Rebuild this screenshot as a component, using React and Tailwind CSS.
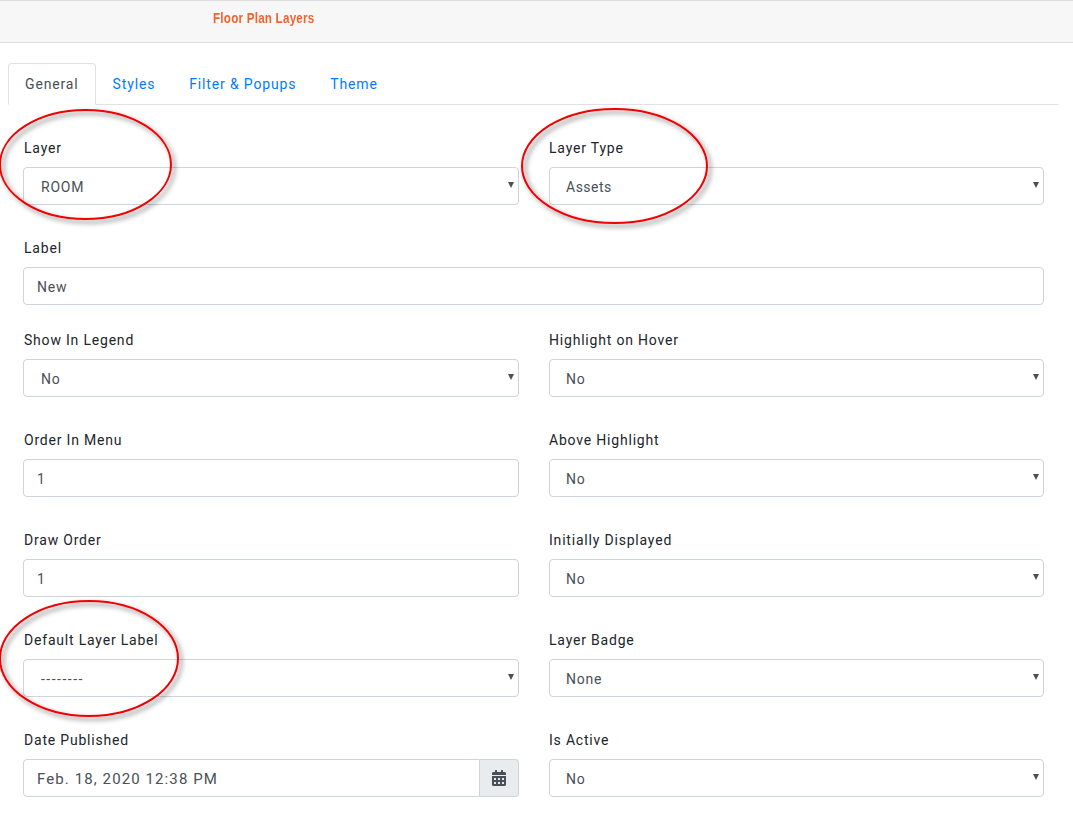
import React from "react";
import { FaCalendarAlt } from "react-icons/fa";

const font = "font-['Roboto','Liberation_Sans',sans-serif] text-[14px] tracking-[0.8px]";

const Field = ({ label, right, className, children }) => (
  <div className={className}>
    <label className={`block h-[20px] mb-[9px] leading-[20px] text-[#212529] ${right ? "" : "pl-px"}`}>{label}</label>
    {children}
  </div>
);

const TextInput = ({ value }) => (
  <input
    readOnly
    value={value}
    className="block w-full h-[38px] pt-[2px] px-[13px] border border-[#ced4da] rounded-[4px] bg-white text-[#495057] outline-none"
  />
);

const Select = ({ value, right, className = "" }) => (
  <div className="relative">
    <select
      value={value}
      onChange={() => {}}
      className={`block w-full h-[38px] pt-[2px] ${right ? "pl-[16px]" : "pl-[17px]"} border border-[#ced4da] rounded-[4px] bg-white text-[#495057] appearance-none outline-none ${className}`}
    >
      <option>{value}</option>
    </select>
    <svg className="absolute right-[5px] top-[15px] w-[6px] h-[6px] pointer-events-none" viewBox="0 0 6 6">
      <path d="M0 0H6L3 6Z" fill="#495057" />
    </svg>
  </div>
);

const DateInput = ({ value }) => (
  <div className="flex h-[38px]">
    <input
      readOnly
      value={value}
      className="flex-1 min-w-0 pt-[2px] px-[13px] border border-[#ced4da] rounded-l-[4px] bg-white text-[15px] tracking-[1.1px] text-[#495057] outline-none"
    />
    <div className="w-[39px] flex items-center justify-center border border-l-0 border-[#ced4da] rounded-r-[4px] bg-[#e9ecef] text-[#495057]">
      <FaCalendarAlt size={16} />
    </div>
  </div>
);

const Tab = ({ active, children }) => (
  <a
    href="#"
    className={
      active
        ? "h-[42px] -mb-px px-4 flex items-center tracking-[0.85px] border border-[#dee2e6] border-b-white rounded-t-[4px] bg-white text-[#495057]"
        : "h-[42px] -mb-px px-4 flex items-center tracking-[0.85px] border border-transparent text-[#007bff]"
    }
  >
    {children}
  </a>
);

// hand drawn red rings over the screenshot
const Rings = () => (
  <svg className="absolute left-0 top-0 w-[1073px] h-[821px] pointer-events-none" viewBox="0 0 1073 821" fill="none">
    <defs>
      <filter id="ring-shadow" x="-20%" y="-20%" width="140%" height="140%">
        <feDropShadow dx="3" dy="3" stdDeviation="2.5" floodColor="#000" floodOpacity="0.55" />
      </filter>
    </defs>
    <g stroke="#f00000" strokeWidth="2" filter="url(#ring-shadow)">
      <ellipse cx="85.5" cy="164.5" rx="85.5" ry="54.5" />
      <ellipse cx="614.5" cy="166" rx="92.5" ry="57" />
      <ellipse cx="89" cy="658.5" rx="89" ry="57.5" />
    </g>
  </svg>
);

export default function App() {
  return (
    <div className={`relative w-[1073px] h-[821px] overflow-hidden bg-white ${font}`}>
      <div className="h-[43px] pt-[7px] pl-[213px] bg-[#f7f7f7] border-t border-b border-[#dedede]">
        <span className="inline-block origin-left scale-x-[0.775] font-['Liberation_Sans',sans-serif] font-bold text-[15px] tracking-[0.3px] leading-[16px] text-[#f4622e]">
          Floor Plan Layers
        </span>
      </div>

      <div className="mt-[20px] ml-[8px] w-[1051px] flex h-[42px] border-b border-[#dee2e6]">
        <Tab active>General</Tab>
        <Tab>Styles</Tab>
        <Tab>Filter &amp; Popups</Tab>
        <Tab>Theme</Tab>
      </div>

      <div className="mt-[33px] ml-[23px] w-[1021px] grid grid-cols-[496px_495px] gap-x-[30px]">
        <Field label="Layer" className="h-[100px]"><Select value="ROOM" /></Field>
        <Field right label="Layer Type" className="h-[100px]"><Select right value="Assets" className="tracking-[0.5px]" /></Field>
        <Field label="Label" className="col-span-2 h-[92px]"><TextInput value="New" /></Field>
        <Field label="Show In Legend" className="h-[100px]"><Select value="No" /></Field>
        <Field right label="Highlight on Hover" className="h-[100px]"><Select right value="No" /></Field>
        <Field label="Order In Menu" className="h-[100px]"><TextInput value="1" /></Field>
        <Field right label="Above Highlight" className="h-[100px]"><Select right value="No" /></Field>
        <Field label="Draw Order" className="h-[100px]"><TextInput value="1" /></Field>
        <Field right label="Initially Displayed" className="h-[100px]"><Select right value="No" /></Field>
        <Field label="Default Layer Label" className="h-[100px]"><Select value="--------" className="tracking-[1.5px]" /></Field>
        <Field right label="Layer Badge" className="h-[100px]"><Select right value="None" /></Field>
        <Field label="Date Published"><DateInput value="Feb. 18, 2020 12:38 PM" /></Field>
        <Field right label="Is Active"><Select right value="No" /></Field>
      </div>

      <Rings />
    </div>
  );
}
